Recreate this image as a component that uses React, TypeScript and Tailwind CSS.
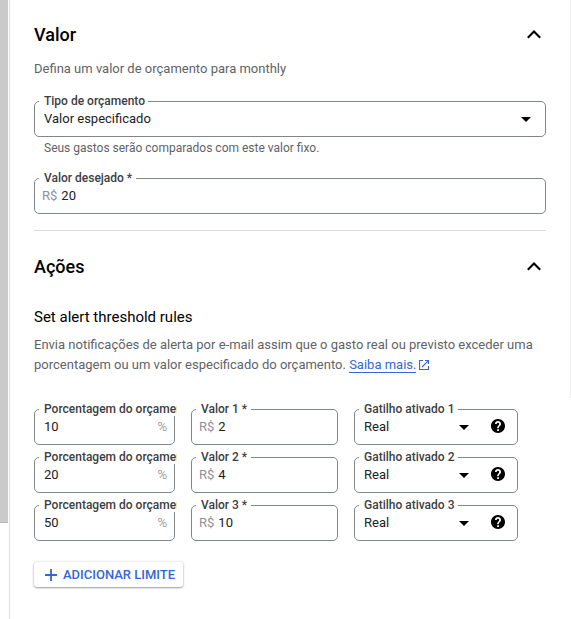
import type { ReactNode } from "react";

function Chevron() {
  return (
    <svg className="relative -top-px mr-1 h-4 w-4" viewBox="0 0 16 16" fill="none" stroke="#000" strokeWidth="2.1">
      <path d="M1.8 11.7 8 5.5l6.2 6.2" />
    </svg>
  );
}

function Caret() {
  return (
    <svg className="h-[5px] w-[10px] shrink-0" viewBox="0 0 10 5" fill="#000">
      <path d="M0 0h10L5 5z" />
    </svg>
  );
}

function Help() {
  return (
    <svg className="mb-0.5 block h-[14px] w-[14px] shrink-0" viewBox="2 2 20 20" fill="#000">
      <path d="M12 2C6.48 2 2 6.48 2 12s4.480 10 10 10 10-4.480 10-10S17.520 2 12 2zm1.300 17h-2.500v-2.500h2.500V19zm1.900-7.400-.9.920C13.450 13.300 13.200 13.900 13.200 15.200h-2.400v-.5c0-1.100.45-2.100 1.170-2.830l1.240-1.260c.37-.36.590-.86.590-1.410 0-1.100-.8-1.900-1.800-1.900s-1.900.8-1.900 1.900H7.700C7.700 6.900 9.600 5 12 5s4.300 1.900 4.300 4.200c0 .95-.4 1.750-1.100 2.400z" />
    </svg>
  );
}

type FieldProps = { label: string; labelClass: string; className: string; children: ReactNode };

function Field({ label, labelClass, className, children }: FieldProps) {
  return (
    <div className={`relative flex h-9 items-center rounded-[5px] border border-[#80868b] text-[13px] text-[#202124] ${className}`}>
      <span className={`absolute -top-[9px] left-1 h-[15px] overflow-hidden bg-white pl-[5px] text-[12px] leading-[16px] font-medium whitespace-nowrap text-[#3c4043] ${labelClass}`}>
        {label}
      </span>
      {children}
    </div>
  );
}

function Currency({ value }: { value: string }) {
  return (
    <span className="pl-[7px]">
      <span className="mr-1 text-[#8e9196]">R$</span>
      {value}
    </span>
  );
}

const rules = [
  { id: 1, percent: "10", amount: "2" },
  { id: 2, percent: "20", amount: "4" },
  { id: 3, percent: "50", amount: "10" },
];

export default function App() {
  return (
    <div className="flex h-[619px] w-[571px] overflow-hidden bg-white font-[Roboto,'Liberation_Sans',sans-serif]">
      <div className="h-[523px] w-2 shrink-0 border-b border-[#b8b8b8] bg-[#cacaca]" />
      <main className="ml-px w-[537px] shrink-0 border-l border-[#dadce0] pl-6">
        <header className="mt-6 flex h-[22px] items-center justify-between">
          <h2 className="text-[18px] leading-[22px] font-medium text-black">Valor</h2>
          <Chevron />
        </header>
        <p className="mt-[13px] text-[13px] leading-5 text-[#5f6368]">Defina um valor de orçamento para monthly</p>

        <Field label="Tipo de orçamento" labelClass="w-[109px]" className="mt-[22px] justify-between pr-[14px] pl-[9px]">
          <span>Valor especificado</span>
          <Caret />
        </Field>
        <p className="mt-[3px] pl-[10px] text-[12px] leading-4 text-[#5f6368]">Seus gastos serão comparados com este valor fixo.</p>
        <Field label="Valor desejado *" labelClass="w-[97px]" className="mt-[22px]">
          <Currency value="20" />
        </Field>

        <hr className="mt-4 border-[#dadce0]" />

        <header className="mt-[25px] flex h-[22px] items-center justify-between">
          <h2 className="text-[18px] leading-[22px] font-medium text-black">Ações</h2>
          <Chevron />
        </header>
        <h3 className="mt-[29px] text-[15px] leading-5 text-black">Set alert threshold rules</h3>
        <p className="mt-2 text-[13px] leading-5 whitespace-nowrap text-[#5f6368]">
          Envia notificações de alerta por e-mail assim que o gasto real ou previsto exceder uma
          <br />
          porcentagem ou um valor especificado do orçamento.{" "}
          <a className="border-b border-[#3367d6] text-[#3367d6]">Saiba mais.</a>
          <svg className="ml-[3px] inline-block h-[10px] w-[10px] align-[-1px]" viewBox="0 0 10 10" fill="none" stroke="#3367d6" strokeWidth="1.1">
            <path d="M4 .55H.55v8.900h8.900V6M6 .55h3.450V4M9.450.55 3 7" />
          </svg>
        </p>

        <div className="mt-[34px] flex flex-col gap-3">
          {rules.map((rule) => (
            <div key={rule.id} className="flex gap-4">
              <Field label="Porcentagem do orçamento" labelClass="w-[138px]" className="w-[141px] justify-between pr-[7px] pl-[9px]">
                <span>{rule.percent}</span>
                <span className="font-light text-[#74787d]">%</span>
              </Field>
              <Field label={`Valor ${rule.id} *`} labelClass="w-[55px]" className="w-[147px]">
                <Currency value={rule.amount} />
              </Field>
              <Field label={`Gatilho ativado ${rule.id}`} labelClass="w-[99px]" className="w-[164px] pr-[12px] pl-[9px]">
                <span className="flex-1">Real</span>
                <Caret />
                <span className="ml-[22px]">
                  <Help />
                </span>
              </Field>
            </div>
          ))}
        </div>

        <button className="mt-[21px] flex h-[25px] w-[149px] items-center rounded-[3px] bg-white pl-[11px] text-[13px] font-medium whitespace-nowrap text-[#3367d6] shadow-[0_1px_2px_rgba(0,0,0,0.35),0_0_3px_rgba(0,0,0,0.14)]">
          <svg className="mr-[6px] h-3 w-3 shrink-0" viewBox="0 0 12 12" stroke="#3367d6" strokeWidth="1.800">
            <path d="M6 0v12M0 6h12" />
          </svg>
          ADICIONAR LIMITE
        </button>
      </main>
      <div className="ml-[24px] h-[398px] w-px shrink-0 bg-[#eeeeee]" />
    </div>
  );
}
